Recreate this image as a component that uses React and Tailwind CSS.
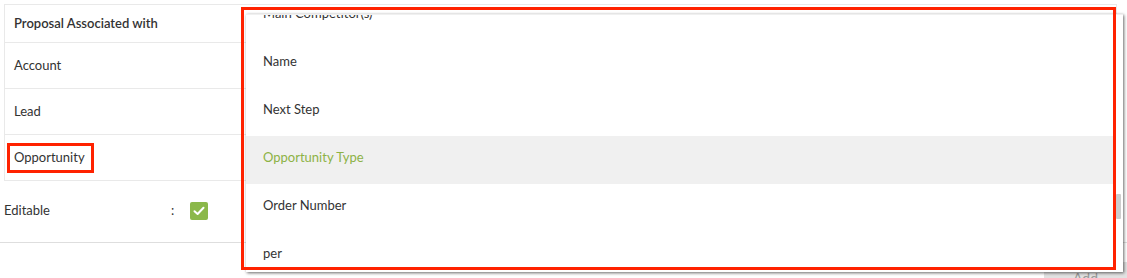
import React from "react";

const items = [
  "Main Competitor(s)",
  "Name",
  "Next Step",
  "Opportunity Type",
  "Order Number",
  "per",
];

export default function App() {
  return (
    <div
      className="relative w-[1127px] h-[278px] overflow-hidden bg-white text-[13px] text-[#333]"
      style={{ fontFamily: "Lato, 'Noto Sans', sans-serif" }}
    >
      {/* Underlying table */}
      <div className="pl-[4px] pt-[4px]">
        <div className="w-[1113px] border-t border-l border-r border-[#e9e9e9]">
          <div className="h-[38px] border-b border-[#e9e9e9] flex items-center pl-[9px] font-semibold">
            Proposal Associated with
          </div>
          <div className="h-[46px] border-b border-[#e9e9e9] flex items-center pl-[9px]">
            Account
          </div>
          <div className="h-[46px] border-b border-[#e9e9e9] flex items-center pl-[9px]">
            Lead
          </div>
          <div className="h-[46px] border-b border-[#e9e9e9] flex items-center pl-[9px]">
            Opportunity
          </div>
        </div>
      </div>

      {/* Editable row */}
      <div className="h-[62px] border-b border-[#dedede] flex items-center pl-[4px] pb-[2px]">
        <span className="w-[167px]">Editable</span>
        <span className="w-[19px]">:</span>
        <span className="w-[18px] h-[18px] rounded-[2px] bg-[#8bb84a] flex items-center justify-center">
          <svg width="12" height="10" viewBox="0 0 12 10">
            <path
              d="M1.5 5.2 L4.6 8 L10.5 1.8"
              fill="none"
              stroke="#fff"
              strokeWidth="2"
              strokeLinecap="round"
              strokeLinejoin="round"
            />
          </svg>
        </span>
      </div>

      {/* Bottom button */}
      <div className="flex justify-end mt-[19px]">
        <button className="w-[83px] h-[32px] bg-[#e2e2e2] text-[#999] text-[14px] flex justify-center pt-[5px]">
          Add
        </button>
      </div>

      {/* Dropdown panel */}
      <div className="absolute left-[246px] top-[14px] w-[877px] h-[258px] bg-white overflow-hidden shadow-[1px_1px_3px_rgba(0,0,0,0.6)] border-t border-[#f0f0f0]">
        <div className="mt-[-23px] mr-[9px]">
          {items.map((it) => (
            <div
              key={it}
              className={
                "h-[48px] flex items-center pl-[17px] pb-[5px] " +
                (it === "Opportunity Type" ? "bg-[#f0f0f0] text-[#8db245]" : "")
              }
            >
              {it}
            </div>
          ))}
        </div>
        <div className="absolute right-[2px] top-[179px] w-[5px] h-[25px] bg-[#cdcdcd] rounded-[1px]" />
      </div>

      {/* Annotation boxes */}
      <div className="absolute left-[7px] top-[143px] w-[87px] h-[30px] border-[3px] border-[#ff2200]" />
      <div className="absolute left-[241px] top-[7px] w-[875px] h-[263px] border-[3px] border-[#ff2200]" />
    </div>
  );
}
